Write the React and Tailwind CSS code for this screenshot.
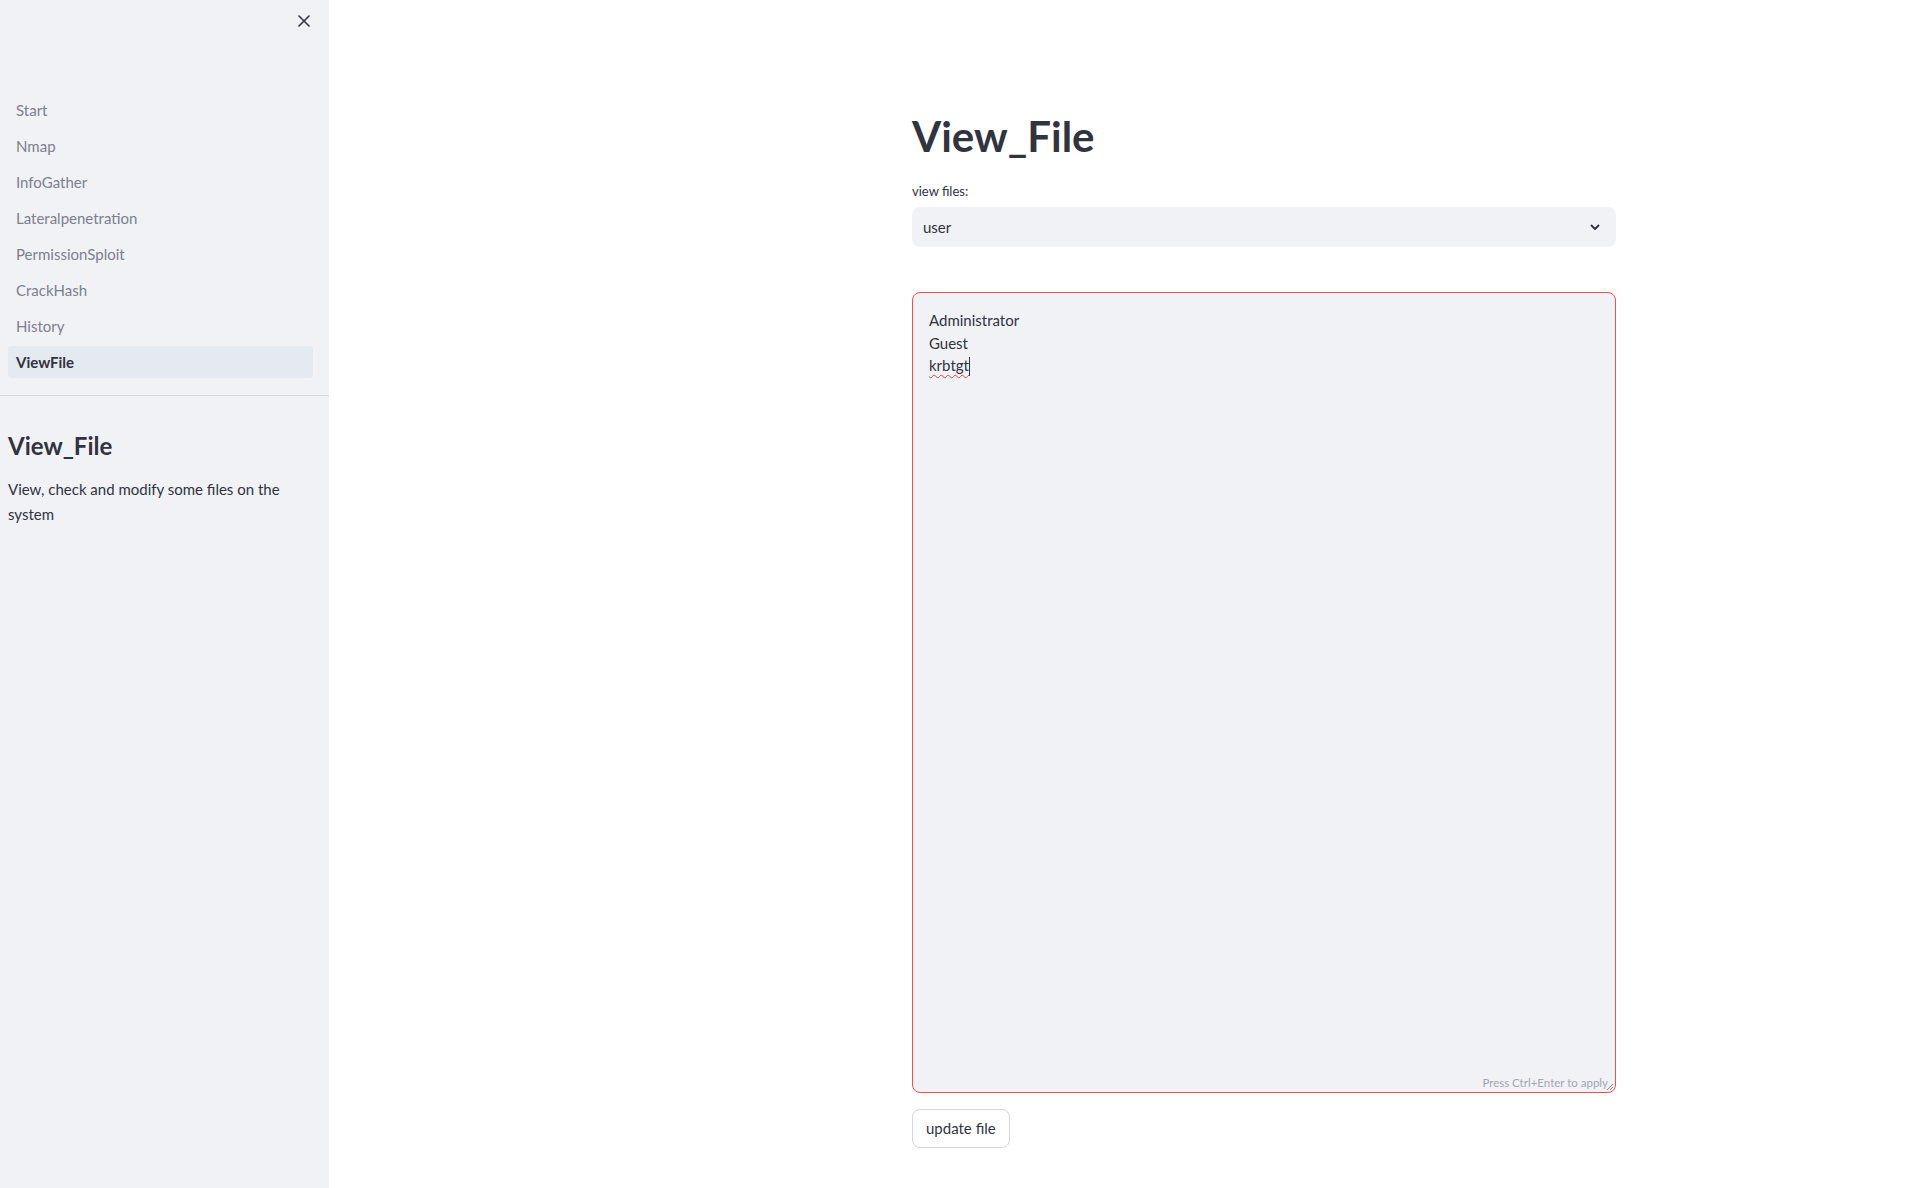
import React from 'react'

const pages = ['Start', 'Nmap', 'InfoGather', 'Lateralpenetration', 'PermissionSploit', 'CrackHash', 'History', 'ViewFile']

function Sidebar() {
  return (
    <aside className="w-[329px] shrink-0 min-h-screen bg-[#f0f2f6]">
      <div className="h-[94px] flex justify-end items-start pt-[14px] pr-[18px]">
        <button className="w-[14px] h-[14px] flex items-center justify-center text-[#31333f]">
          <svg width="12" height="12" viewBox="0 0 12 12" fill="none" stroke="currentColor" strokeWidth="1.6" strokeLinecap="round">
            <path d="M1 1 L11 11 M11 1 L1 11" />
          </svg>
        </button>
      </div>
      <nav className="pl-2 pr-4 pb-[17px] flex flex-col gap-1 border-b border-[#d6d8dd]">
        {pages.map((p) => {
          const active = p === 'ViewFile'
          return (
            <div
              key={p}
              className={
                active
                  ? 'h-8 flex items-center px-2 rounded bg-[#e5e9f0] text-[#31333f] font-bold text-[15px]'
                  : 'h-8 flex items-center px-2 rounded text-[#7d808c] text-[15px]'
              }
            >
              {p}
            </div>
          )
        })}
      </nav>
      <div className="px-2 pt-[34px]">
        <h2 className="text-[24px] leading-[32px] font-bold text-[#31333f] mb-[15px]">View_File</h2>
        <p className="text-[15px] leading-[25px] text-[#31333f] pr-6">
          View, check and modify some files on the system
        </p>
      </div>
    </aside>
  )
}

export default function App() {
  return (
    <div className="flex min-h-screen bg-white text-[#31333f]" style={{ fontFamily: 'Lato, "Noto Sans", sans-serif' }}>
      <Sidebar />
      <main className="flex-1 pl-[583px] pt-[112px]">
        <div className="w-[704px]">
          <h1 className="text-[42px] leading-[48px] font-bold text-[#31333f]">View_File</h1>

          <label className="block mt-[21px] text-[13px] leading-[20px] text-[#31333f]">view files:</label>
          <div className="mt-[6px] h-10 rounded-lg bg-[#f0f2f6] flex items-center justify-between pl-[11px] pr-[15px]">
            <span className="text-[15px]">user</span>
            <svg width="12" height="12" viewBox="0 0 12 12" fill="none" stroke="#31333f" strokeWidth="1.8" strokeLinecap="round" strokeLinejoin="round">
              <path d="M2.5 4.5 L6 8 L9.5 4.5" />
            </svg>
          </div>

          <div className="relative mt-[45px] h-[801px] rounded-lg border border-[#ff4b4b] bg-[#f0f2f6] px-4 pt-[16px]">
            <div className="text-[15px] leading-[22.5px] text-[#31333f]">
              <div>Administrator</div>
              <div>Guest</div>
              <div>
                <span className="underline decoration-wavy decoration-[#e0454a] decoration-1 underline-offset-[3px]">krbtgt</span>
                <span className="inline-block w-px h-[19px] bg-[#31333f] align-middle -mt-[2px]"></span>
              </div>
            </div>
            <div className="absolute right-[7px] bottom-[2px] text-[11.5px] leading-[14px] text-[#a3a6b2]">
              Press Ctrl+Enter to apply
            </div>
            <svg className="absolute right-[1px] bottom-[1px]" width="8" height="8" viewBox="0 0 8 8" stroke="#666" strokeWidth="0.8">
              <path d="M7 1 L1 7 M7 4 L4 7" />
            </svg>
          </div>

          <button className="mt-[16px] h-[39px] px-[13px] rounded-lg border border-[#d6d6d9] bg-white text-[15px] text-[#31333f]">
            update file
          </button>
        </div>
      </main>
    </div>
  )
}
